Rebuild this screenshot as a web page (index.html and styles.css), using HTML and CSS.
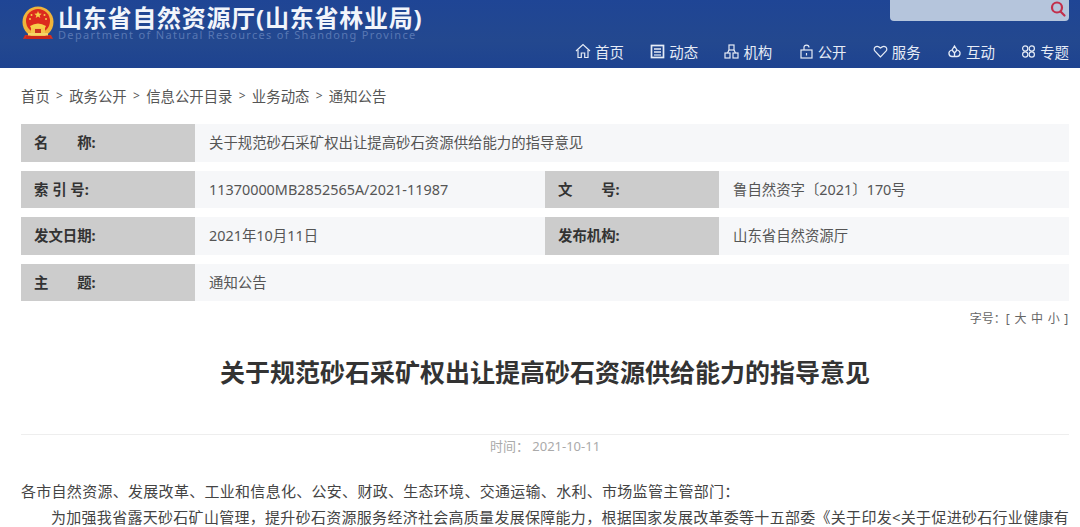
FILE: index.html
```html
<!DOCTYPE html>
<html lang="zh-CN">
<head>
  <meta charset="UTF-8" />
  <meta name="viewport" content="width=device-width, initial-scale=1.0"/>
  <title>关于规范砂石采矿权出让提高砂石资源供给能力的指导意见</title>
  <link rel="stylesheet" href="styles.css">
</head>
<body>

<header class="header">
  <div class="brand">
    <svg class="emblem" width="34" height="36" viewBox="0 0 34 36">
      <path d="M4 30 L2 34 L9 33 L25 33 L32 34 L30 30 Z" fill="#d8301f"/>
      <circle cx="17" cy="17" r="15.5" fill="#f0b43a"/>
      <circle cx="17" cy="16" r="12" fill="#dc2a1e"/>
      <path d="M17 6l1 2.6 2.7.1-2.1 1.7.7 2.6-2.3-1.5-2.3 1.5.7-2.6-2.1-1.7 2.7-.1z" fill="#f6cf4a"/>
      <circle cx="10.5" cy="10" r="1" fill="#f6cf4a"/>
      <circle cx="23.5" cy="10" r="1" fill="#f6cf4a"/>
      <circle cx="9" cy="14" r="1" fill="#f6cf4a"/>
      <circle cx="25" cy="14" r="1" fill="#f6cf4a"/>
      <path d="M9 21 Q17 16 25 21 L24 23 L10 23 Z" fill="#f6cf4a"/>
      <rect x="10" y="23" width="14" height="5" fill="#f3c64a"/>
      <rect x="14" y="24" width="6" height="4" fill="#c9301f"/>
      <rect x="7" y="28" width="20" height="2.5" fill="#f6d56a"/>
      <rect x="5" y="31" width="24" height="3" fill="#c9261c"/>
    </svg>
    <div class="brand-text">
      <div class="brand-name">山东省自然资源厅(山东省林业局)</div>
      <div class="brand-en">Department of Natural Resources of Shandong Province</div>
    </div>
  </div>

  <div class="header-right">
    <div class="search">
      <svg width="18" height="18" viewBox="0 0 18 18" fill="none" stroke="#c22f4c" stroke-width="2.2">
        <circle cx="8" cy="7.5" r="5"/>
        <path d="M11.5 11.5 L15.5 15.5" stroke-linecap="round"/>
      </svg>
    </div>
    <nav class="nav">
      <a class="nav-item">
        <svg width="16" height="16" viewBox="0 0 16 16" fill="none" stroke="#e6ecf6" stroke-width="1.2">
          <path d="M1 8 L8 1.5 L15 8"/>
          <path d="M3 7 V14.5 H6.3 V10 H9.7 V14.5 H13 V7"/>
        </svg>首页</a>
      <a class="nav-item">
        <svg width="15" height="15" viewBox="0 0 15 15" fill="none" stroke="#e6ecf6" stroke-width="1.7">
          <rect x="1.5" y="1.5" width="12" height="12"/>
          <path d="M4 5 H11 M4 8 H11" stroke-width="1.5"/>
          <path d="M4 11 H11" stroke-width="1.2"/>
        </svg>动态</a>
      <a class="nav-item">
        <svg width="15" height="15" viewBox="0 0 15 15" fill="none" stroke="#e6ecf6" stroke-width="1.2">
          <rect x="5" y="1" width="5" height="5"/>
          <rect x="1" y="9" width="5" height="5"/>
          <rect x="9" y="9" width="5" height="5"/>
          <path d="M5 6 L3.5 9 M10 6 L11.5 9"/>
        </svg>机构</a>
      <a class="nav-item">
        <svg width="15" height="15" viewBox="0 0 15 15" fill="none" stroke="#e6ecf6" stroke-width="1.2">
          <rect x="2" y="6" width="11" height="8"/>
          <path d="M5 6 V3.5 Q5 1.2 7.5 1.2 Q10 1.2 10 3.5"/>
          <path d="M7.5 9 V11.5"/>
        </svg>公开</a>
      <a class="nav-item">
        <svg width="15" height="15" viewBox="0 0 15 15" fill="none" stroke="#e6ecf6" stroke-width="1.2">
          <path d="M7.5 13 L1.8 7 Q0.5 5 2 3.2 Q4.5 1 7.5 4 Q10.5 1 13 3.2 Q14.5 5 13.2 7 Z"/>
        </svg>服务</a>
      <a class="nav-item">
        <svg width="15" height="15" viewBox="0 0 15 15" fill="none" stroke="#e6ecf6" stroke-width="1.3">
          <path d="M7.5 2 L10 6 Q13.5 7 13 10 Q12.5 12.5 10 12.5 H5 Q2.5 12.5 2 10 Q1.5 7 5 6 Z"/>
          <path d="M5 6 L7.5 9 L10 6 M7.5 9 V12.5"/>
        </svg>互动</a>
      <a class="nav-item">
        <svg width="15" height="15" viewBox="0 0 15 15" fill="none" stroke="#e6ecf6" stroke-width="1.2">
          <circle cx="4.2" cy="4.5" r="2.6"/>
          <circle cx="10.8" cy="4.5" r="2.6"/>
          <circle cx="4.2" cy="10.5" r="2.6"/>
          <circle cx="10.8" cy="10.5" r="2.6"/>
        </svg>专题</a>
    </nav>
  </div>
</header>

<div class="crumbs">
  <a>首页</a><span class="sep">&gt;</span><a>政务公开</a><span class="sep">&gt;</span><a>信息公开目录</a><span class="sep">&gt;</span><a>业务动态</a><span class="sep">&gt;</span><a>通知公告</a>
</div>

<section class="meta">
  <div class="meta-row">
    <div class="meta-label">名　　称:</div>
    <div class="meta-value">关于规范砂石采矿权出让提高砂石资源供给能力的指导意见</div>
  </div>
  <div class="meta-row">
    <div class="meta-label">索 引 号:</div>
    <div class="meta-value half">11370000MB2852565A/2021-11987</div>
    <div class="meta-label">文　　号:</div>
    <div class="meta-value">鲁自然资字〔2021〕170号</div>
  </div>
  <div class="meta-row">
    <div class="meta-label">发文日期:</div>
    <div class="meta-value half">2021年10月11日</div>
    <div class="meta-label">发布机构:</div>
    <div class="meta-value">山东省自然资源厅</div>
  </div>
  <div class="meta-row">
    <div class="meta-label">主　　题:</div>
    <div class="meta-value">通知公告</div>
  </div>
</section>

<div class="font-size">字号&#xFF1A;<span class="sizes">[ 大 中 小 ]</span></div>

<article class="article">
  <h1 class="title">关于规范砂石采矿权出让提高砂石资源供给能力的指导意见</h1>
  <div class="date">时间&#xFF1A; 2021-10-11</div>
  <p class="lead">各市自然资源、发展改革、工业和信息化、公安、财政、生态环境、交通运输、水利、市场监管主管部门&#xFF1A;</p>
  <p class="para">为加强我省露天砂石矿山管理&#xFF0C;提升砂石资源服务经济社会高质量发展保障能力&#xFF0C;根据国家发展改革委等十五部委《关于印发&lt;关于促进砂石行业健康有</p>
</article>

</body>
</html>
```

FILE: styles.css
```css
html, body {
  height: 527px;
  overflow: hidden;
}
body {
  margin: 0;
  background: #fff;
  color: #555;
  font-family: "Noto Sans", "Noto Sans CJK SC", sans-serif;
}

.header {
  display: flex;
  justify-content: space-between;
  height: 68px;
  padding: 0 11px 0 21px;
  background: linear-gradient(#1f4595, #23488f 60%, #1e4390);
}
.brand {
  display: flex;
  gap: 3px;
  align-items: flex-start;
  padding-top: 5px;
}
.brand-text {
  padding-top: 1px;
}
.brand-name {
  color: #f2f5fb;
  font-size: 24px;
  font-weight: bold;
  letter-spacing: 0.75px;
  line-height: 24px;
}
.brand-en {
  color: #5877b3;
  font-size: 11px;
  letter-spacing: 1.33px;
  line-height: 10px;
  white-space: nowrap;
}
.header-right {
  display: flex;
  flex-direction: column;
  align-items: flex-end;
  justify-content: space-between;
}
.search {
  display: flex;
  justify-content: flex-end;
  width: 179px;
  height: 21px;
  padding-right: 2px;
  box-sizing: border-box;
  background: #b5c5dc;
  border-radius: 0 0 4px 4px;
}
.nav {
  display: flex;
  gap: 26.4px;
  height: 30px;
  padding-bottom: 4px;
  box-sizing: border-box;
}
.nav-item {
  display: flex;
  gap: 4px;
  align-items: center;
  color: #e6ecf6;
  font-size: 14.4px;
  white-space: nowrap;
}

.crumbs {
  display: flex;
  gap: 5px;
  align-items: center;
  height: 20px;
  margin: 17px 21px 0;
  font-size: 14.4px;
}
.crumbs .sep {
  padding: 0 1.25px;
  font-size: 12px;
}

.meta {
  margin: 19px 11px 0 21px;
}
.meta-row {
  display: flex;
  height: 37.5px;
  margin-bottom: 9px;
  background: #f6f7f9;
}
.meta-label {
  flex: none;
  box-sizing: border-box;
  width: 174px;
  padding-left: 13px;
  background: #cccccc;
  color: #333;
  font-size: 14.4px;
  font-weight: bold;
  line-height: 37.5px;
}
.meta-value {
  flex: 1;
  padding-left: 14px;
  font-size: 14.4px;
  line-height: 37.5px;
  white-space: nowrap;
}
.meta-value.half {
  flex: none;
  box-sizing: border-box;
  width: 350px;
}

.font-size {
  margin: 1px 11px 0 0;
  color: #666;
  font-size: 12px;
  line-height: 18px;
  text-align: right;
}
.sizes {
  letter-spacing: 0.75px;
}

.article {
  margin: 0 11px 0 21px;
}
.title {
  margin: 26px 0 0;
  padding-bottom: 44px;
  border-bottom: 1px solid #eee;
  color: #333;
  font-size: 25px;
  font-weight: bold;
  line-height: 36px;
  text-align: center;
}
.date {
  margin-top: 2px;
  color: #aaa;
  font-size: 13px;
  line-height: 18px;
  text-align: center;
}
.lead, .para {
  margin: 0;
  color: #444;
  font-size: 15px;
  letter-spacing: 0.29px;
  line-height: 26px;
  white-space: nowrap;
}
.lead {
  margin-top: 23px;
}
.para {
  text-indent: 30px;
}
```
